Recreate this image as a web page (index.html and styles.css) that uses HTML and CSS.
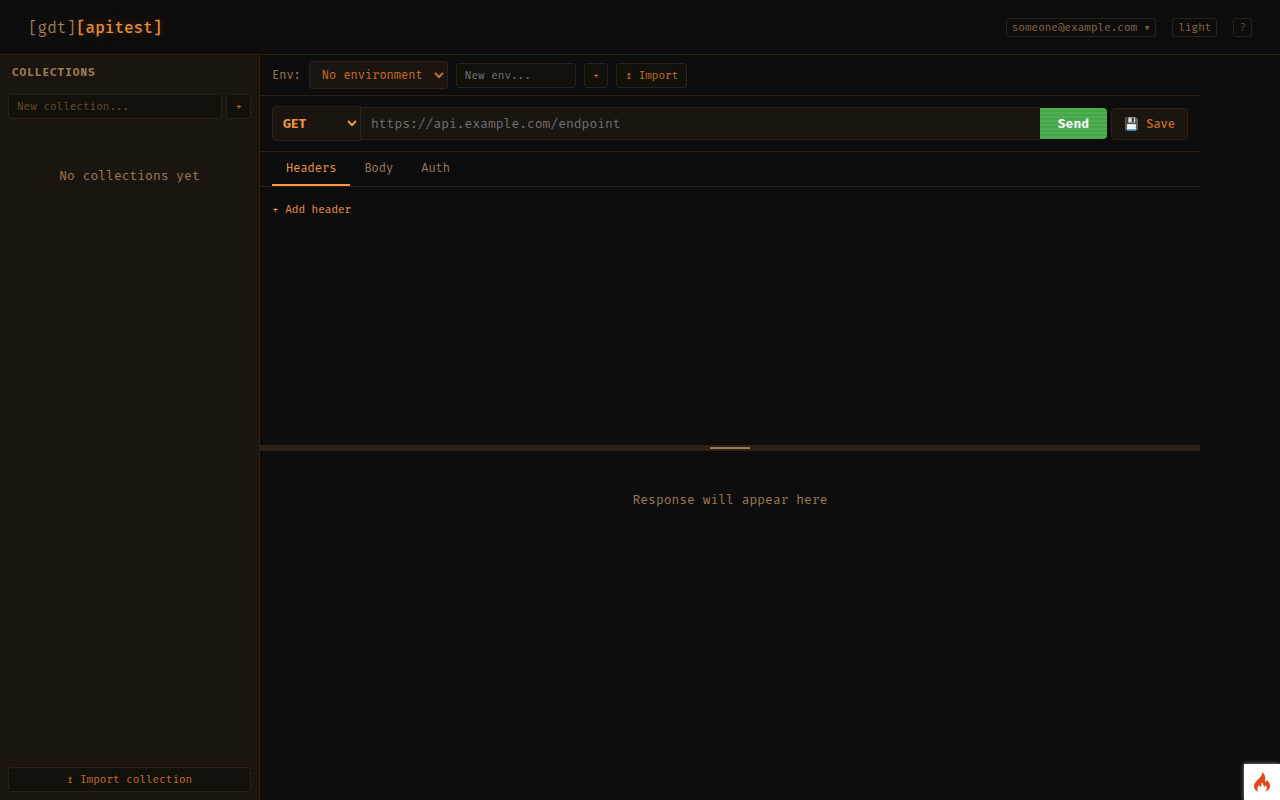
FILE: index.html
```html
<!DOCTYPE html>
<html lang="en">
<head>
    <meta charset="UTF-8">
    <meta name="viewport" content="width=device-width, initial-scale=1.0">
    <title>[gdt][apitest]</title>

    <link rel="stylesheet" href="styles.css">
</head>
<body>

    <header class="topbar">
        <a class="logo" href="#"><span class="logo-prefix">[gdt]</span><span class="logo-name">[apitest]</span></a>
        <div class="topbar-actions">
            <button class="chip" type="button">someone@example.com ▾</button>
            <button class="chip" type="button">light</button>
            <button class="chip chip-help" type="button">?</button>
        </div>
    </header>

    <div class="app">
        <aside class="sidebar">
            <h2 class="sidebar-title">Collections</h2>
            <form class="sidebar-new">
                <input class="small-input" type="text" placeholder="New collection..." aria-label="New collection">
                <button class="small-btn" type="button">+</button>
            </form>
            <p class="empty">No collections yet</p>
            <button class="small-btn sidebar-import" type="button">↥ Import collection</button>
        </aside>

        <main class="workspace">
            <div class="env-bar">
                <label for="env">Env:</label>
                <select id="env" class="env-select">
                    <option>No environment</option>
                </select>
                <input class="small-input env-input" type="text" placeholder="New env..." aria-label="New environment">
                <button class="small-btn" type="button">+</button>
                <button class="small-btn" type="button">↥ Import</button>
            </div>

            <form class="request-bar">
                <select class="method" aria-label="Method">
                    <option>GET</option>
                    <option>POST</option>
                    <option>PUT</option>
                    <option>PATCH</option>
                    <option>DELETE</option>
                </select>
                <input class="url" type="text" placeholder="https://api.example.com/endpoint" aria-label="URL">
                <button class="send" type="button">Send</button>
                <button class="save" type="button">💾 Save</button>
            </form>

            <nav class="tabs">
                <button class="tab active" type="button">Headers</button>
                <button class="tab" type="button">Body</button>
                <button class="tab" type="button">Auth</button>
            </nav>

            <section class="request-panel">
                <button class="add-header" type="button">+ Add header</button>
            </section>

            <div class="resizer"></div>

            <section class="response-panel">
                <p class="empty">Response will appear here</p>
            </section>
        </main>
    </div>

    <div class="scanlines"></div>

    <a class="debug-badge" href="#" aria-label="Debug toolbar">
        <svg width="16" height="20" viewBox="0 0 16 20">
            <path fill="#dd4814" d="M8 0C8.600 3 6.800 4.600 4.500 7C2 9.600 0 11.500 0 14.200C0 17 2 19 5 19.500C3.700 18.600 3.200 17.600 3.400 16.400C3.600 15.200 4.600 14.500 4.700 13C5.700 13.600 6.100 14.400 6 15.500C7.600 14.200 8 12.500 7.200 10.600C10 11.800 9 14 10.700 14.700C11.800 14.800 11.800 13.700 11.400 12.800C13.200 14.500 13.700 17.600 10.700 19.500C14 18.900 16 16.700 16 13.900C16 10.900 13.900 9.400 13 7.500C12.900 8.800 12.600 9.500 11.700 10C10.800 9.800 11.100 8.700 11.200 7.500C11.400 4.500 10.700 1.600 8 0Z"/>
        </svg>
    </a>

</body>
</html>
```

FILE: styles.css
```css
:root {
    --bg: #0d0d0d;
    --panel: #1c1611;
    --field: #12110c;
    --border: #2f2217;
    --orange: #f79a45;
    --amber: #cc7028;
    --muted: #a07d55;
}

* {
    box-sizing: border-box;
}

body {
    margin: 0;
    height: 100vh;
    display: flex;
    flex-direction: column;
    background-color: var(--bg);
    color: var(--muted);
    font-family: "Fira Mono", "Liberation Mono", monospace;
    font-size: 13px;
    overflow: hidden;
}

button, input, select {
    font-family: inherit;
    margin: 0;
}

button {
    cursor: pointer;
}

.topbar {
    display: flex;
    justify-content: space-between;
    align-items: center;
    height: 55px;
    padding: 0 28px;
    border-bottom: 1px solid var(--border);
}

.logo {
    font-size: 16px;
    text-decoration: none;
}

.logo-prefix {
    color: var(--muted);
}

.logo-name {
    color: #e88f3b;
    font-weight: 500;
    text-shadow: 0 0 12px rgba(255, 150, 50, 0.3);
}

.topbar-actions {
    display: flex;
    align-items: center;
    gap: 16px;
}

.chip {
    height: 19px;
    padding: 0 5px;
    background: none;
    border: 1px solid var(--border);
    border-radius: 3px;
    color: #8d6b45;
    font-size: 11px;
}

.chip-help {
    color: #6b5030;
}

.app {
    flex: 1;
    display: flex;
    min-height: 0;
    max-width: 1200px;
}

.sidebar {
    width: 260px;
    display: flex;
    flex-direction: column;
    padding: 8px;
    background-color: var(--panel);
    border-right: 1px solid var(--border);
}

.sidebar-title {
    margin: 0;
    padding: 0 4px;
    font-size: 11px;
    line-height: 19px;
    letter-spacing: 1px;
    text-transform: uppercase;
}

.sidebar-new {
    display: flex;
    gap: 4px;
    margin-top: 12px;
}

.small-input, .small-btn {
    height: 25px;
    padding: 0 8px;
    background-color: var(--field);
    border: 1px solid var(--border);
    border-radius: 3px;
    font-size: 11px;
}

.small-input {
    min-width: 0;
    color: var(--orange);
}

.small-btn {
    color: var(--amber);
}

.sidebar-new .small-input {
    flex: 1;
}

.sidebar-new .small-input::placeholder {
    color: #6b4c2a;
}

.empty {
    margin: 0;
    padding: 40px 16px;
    line-height: 18px;
    text-align: center;
}

.sidebar .empty {
    padding-top: 48px;
}

.sidebar-import {
    margin-top: auto;
}

.workspace {
    flex: 1;
    min-width: 0;
    display: flex;
    flex-direction: column;
}

.env-bar {
    display: flex;
    align-items: center;
    gap: 8px;
    height: 41px;
    padding: 0 12px;
    border-bottom: 1px solid var(--border);
    font-size: 12px;
}

.env-select {
    height: 28px;
    padding: 0 8px;
    background-color: var(--panel);
    border: 1px solid var(--border);
    border-radius: 3px;
    color: var(--amber);
    font-size: 12px;
}

.env-input {
    width: 120px;
}

.request-bar {
    display: flex;
    align-items: center;
    height: 56px;
    padding: 0 12px;
    border-bottom: 1px solid var(--border);
}

.method {
    width: 89px;
    height: 35px;
    padding: 0 6px;
    background-color: var(--panel);
    border: 1px solid var(--border);
    border-radius: 4px 0 0 4px;
    color: var(--orange);
    font-size: 13px;
    font-weight: 700;
}

.url {
    flex: 1;
    min-width: 0;
    height: 33px;
    padding: 0 10px;
    background-color: var(--panel);
    border: 1px solid var(--border);
    border-width: 1px 0;
    color: var(--orange);
    font-size: 13px;
}

.send {
    height: 31px;
    padding: 0 18px;
    background-color: #4caf50;
    border: none;
    border-radius: 0 4px 4px 0;
    color: #fff;
    font-size: 13px;
    font-weight: 700;
}

.save {
    height: 32px;
    margin-left: 4px;
    padding: 0 12px;
    background-color: var(--panel);
    border: 1px solid var(--border);
    border-radius: 4px;
    color: var(--amber);
    font-size: 12px;
    font-weight: 500;
}

.tabs {
    display: flex;
    height: 35px;
    padding: 0 12px;
    border-bottom: 1px solid var(--border);
}

.tab {
    padding: 0 14px;
    background: none;
    border: none;
    border-bottom: 2px solid transparent;
    color: var(--muted);
    font-size: 12px;
}

.tab.active {
    color: var(--orange);
    border-bottom-color: var(--orange);
}

.request-panel {
    flex: 2;
    padding: 12px 12px 14px;
}

.add-header {
    height: 20px;
    padding: 0;
    background: none;
    border: none;
    color: var(--orange);
    font-size: 11px;
}

.resizer {
    display: flex;
    justify-content: center;
    align-items: center;
    height: 6px;
    background-color: var(--border);
    cursor: row-resize;
}

.resizer::after {
    content: "";
    width: 40px;
    height: 2px;
    background-color: var(--muted);
}

.response-panel {
    flex: 3;
}

/* CRT effect over the whole page */
.scanlines {
    position: fixed;
    inset: 0;
    pointer-events: none;
    background: repeating-linear-gradient(0deg, rgba(0, 0, 0, 0.06) 0, rgba(0, 0, 0, 0.06) 2px, transparent 2px, transparent 4px);
}

.debug-badge {
    position: fixed;
    right: 0;
    bottom: 0;
    display: flex;
    justify-content: center;
    align-items: center;
    width: 36px;
    height: 36px;
    background-color: #fff;
    box-shadow: 0 0 4px #999;
}
```
